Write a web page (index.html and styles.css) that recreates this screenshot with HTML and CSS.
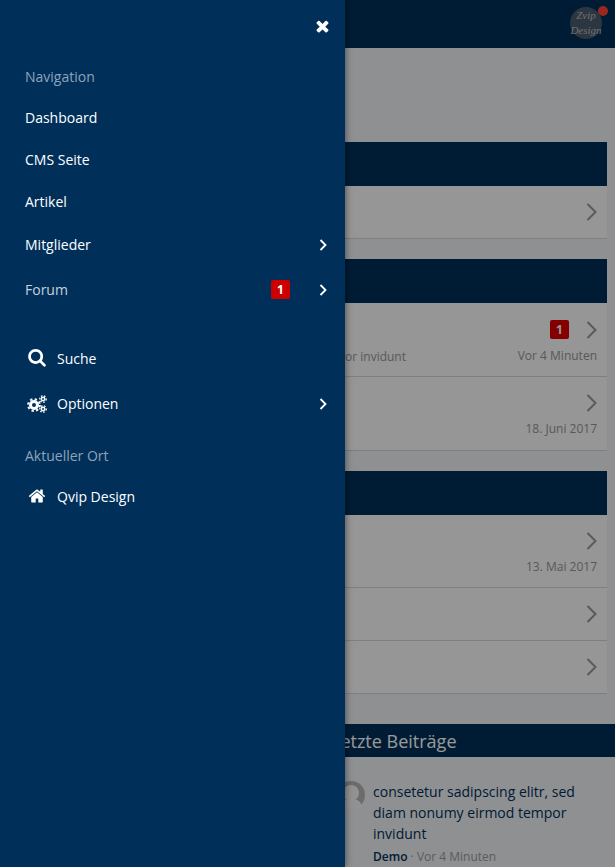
FILE: index.html
```html
<!DOCTYPE html>
<html lang="de">
<head>
<meta charset="utf-8">
<title>Qvip Design</title>
<link rel="stylesheet" href="styles.css">
</head>
<body>
<div class="page">
  <header class="topbar">
    <div class="logo"><span>Zvip</span><span>Design</span><i class="logo-dot"></i></div>
  </header>
  <main class="main">
    <section class="cat">
      <div class="cat-head"></div>
      <div class="row"><div class="row-main"></div><div class="row-side"><div class="row-top"><svg class="row-chev" viewBox="0 0 11 18"><path d="M1.500 1 9.500 9l-8 8"/></svg></div></div></div>
    </section>
    <section class="cat">
      <div class="cat-head"></div>
      <div class="row"><div class="row-main"><span>eirmod tempor invidunt</span></div><div class="row-side"><div class="row-top"><span class="badge badge-row">1</span><svg class="row-chev" viewBox="0 0 11 18"><path d="M1.500 1 9.500 9l-8 8"/></svg></div><div class="row-meta">Vor 4 Minuten</div></div></div>
      <div class="row row-lg"><div class="row-main"></div><div class="row-side"><div class="row-top"><svg class="row-chev" viewBox="0 0 11 18"><path d="M1.500 1 9.500 9l-8 8"/></svg></div><div class="row-meta">18. Juni 2017</div></div></div>
    </section>
    <section class="cat">
      <div class="cat-head"></div>
      <div class="row"><div class="row-main"></div><div class="row-side"><div class="row-top"><svg class="row-chev" viewBox="0 0 11 18"><path d="M1.500 1 9.500 9l-8 8"/></svg></div><div class="row-meta">13. Mai 2017</div></div></div>
      <div class="row"><div class="row-main"></div><div class="row-side"><div class="row-top"><svg class="row-chev" viewBox="0 0 11 18"><path d="M1.500 1 9.500 9l-8 8"/></svg></div></div></div>
      <div class="row"><div class="row-main"></div><div class="row-side"><div class="row-top"><svg class="row-chev" viewBox="0 0 11 18"><path d="M1.500 1 9.500 9l-8 8"/></svg></div></div></div>
    </section>
  </main>
  <h2 class="latest-head">Letzte Beiträge</h2>
  <article class="post">
    <svg class="avatar" viewBox="0 0 28 28"><circle cx="14" cy="14" r="14" class="avatar-bg"/><circle cx="14" cy="12" r="8" class="avatar-fg"/><path d="M3 28c0-8 5-10 11-10s11 2 11 10z" class="avatar-fg"/></svg>
    <div class="post-body">
      <p class="post-text">consetetur sadipscing elitr, sed diam nonumy eirmod tempor invidunt</p>
      <p class="post-meta"><b>Demo</b> · <span>Vor 4 Minuten</span></p>
    </div>
  </article>
</div>
<div class="overlay"></div>
<nav class="drawer">
  <div class="drawer-top">
    <svg class="close" viewBox="0 0 1408 1792"><path d="M1298 1322q0 40-28 68l-136 136q-28 28-68 28t-68-28l-294-294-294 294q-28 28-68 28t-68-28l-136-136q-28-28-28-68t28-68l294-294-294-294q-28-28-28-68t28-68l136-136q28-28 68-28t68 28l294 294 294-294q28-28 68-28t68 28l136 136q28 28 28 68t-28 68l-294 294 294 294q28 28 28 68z"/></svg>
  </div>
  <div class="drawer-label">Navigation</div>
  <a class="item">Dashboard</a>
  <a class="item">CMS Seite</a>
  <a class="item">Artikel</a>
  <a class="item item-tall">Mitglieder<svg class="chev" viewBox="0 0 8 12"><path d="M1.500 1 6.500 6l-5 5"/></svg></a>
  <a class="item item-tall item-dim">Forum<span class="badge badge-menu">1</span><svg class="chev" viewBox="0 0 8 12"><path d="M1.500 1 6.500 6l-5 5"/></svg></a>
  <a class="item item-tall item-first"><svg class="ico ico-search" viewBox="0 0 1664 1792"><path d="M1152 704q0-185-131.500-316.500t-316.500-131.500-316.500 131.500-131.500 316.500 131.500 316.500 316.500 131.500 316.500-131.500 131.500-316.500zm512 832q0 52-38 90t-90 38q-54 0-90-38l-343-342q-179 124-399 124-143 0-273.500-55.500t-225-150-150-225-55.500-273.500 55.500-273.500 150-225 225-150 273.500-55.500 273.500 55.500 225 150 150 225 55.500 273.500q0 220-124 399l343 343q37 37 37 90z"/></svg>Suche</a>
  <a class="item item-tall"><svg class="ico ico-gears" viewBox="0 0 20 18"><circle cx="7" cy="10" r="3.500" class="gear-ring-l"/><circle cx="7" cy="10" r="5.900" class="gear-teeth-l"/><circle cx="16" cy="4" r="1.700" class="gear-ring-s"/><circle cx="16" cy="4" r="3.200" class="gear-teeth-s"/><circle cx="16" cy="14" r="1.700" class="gear-ring-s"/><circle cx="16" cy="14" r="3.200" class="gear-teeth-s"/></svg>Optionen<svg class="chev" viewBox="0 0 8 12"><path d="M1.500 1 6.500 6l-5 5"/></svg></a>
  <div class="drawer-label drawer-label-2">Aktueller Ort</div>
  <a class="item"><svg class="ico ico-home" viewBox="0 0 1664 1792"><path d="M1408 992v480q0 26-19 45t-45 19h-384v-384h-256v384h-384q-26 0-45-19t-19-45v-480q0-1 .5-3t.5-3l575-474 575 474q1 2 1 6zm223-69l-62 74q-8 9-21 11h-3q-13 0-21-7l-692-577-692 577q-12 8-24 7-13-2-21-11l-62-74q-8-10-7-23.500t11-21.500l719-599q32-26 76-26t76 26l244 204v-195q0-14 9-23t23-9h192q14 0 23 9t9 23v408l219 182q10 8 11 21.500t-7 23.500z"/></svg>Qvip Design</a>
</nav>
</body>
</html>
```
FILE: styles.css
```css
* { box-sizing: border-box; }
html, body { margin: 0; height: 100%; overflow: hidden; }
body { font-family: "Open Sans", sans-serif; font-size: 14px; color: #002f58; background: #eef0f3; position: relative; }

.page { height: 867px; overflow: hidden; background: #eef0f3; }
.topbar { height: 48px; background: #002f58; display: flex; justify-content: flex-end; align-items: flex-start; padding: 7px 13px 0 0; }
.logo { position: relative; width: 32px; height: 32px; border-radius: 50%; background: #4a5a6c; color: #bdbdbd; font-family: "Liberation Serif", serif; font-style: italic; font-size: 11px; line-height: 15px; display: flex; flex-direction: column; align-items: center; justify-content: center; }
.logo-dot { position: absolute; top: -1px; right: -6px; width: 10px; height: 10px; border-radius: 50%; background: #ff4334; }

.main { padding: 94px 8px 0; }
.cat { margin-bottom: 20px; }
.cat-head { height: 44px; background: #002f58; }
.row { display: flex; background: #fafafa; border-bottom: 1px solid #d4d4d4; padding: 17px 10px 0; }
.row-lg { padding-bottom: 1px; }
.row-main { width: 398px; margin-left: -10px; flex: none; align-self: flex-end; display: flex; justify-content: flex-end; padding-bottom: 11px; font-size: 12px; line-height: 16px; color: #949494; white-space: nowrap; }
.row-side { flex: 1; display: flex; flex-direction: column; align-items: flex-end; padding-bottom: 17px; }
.row-top { display: flex; align-items: center; min-height: 18px; }
.row-chev { width: 11px; height: 18px; fill: none; stroke: #969696; stroke-width: 2; }
.row-meta { margin: 9px 0 -5px; font-size: 12px; line-height: 16px; color: #949494; }
.badge { width: 19px; height: 19px; border-radius: 2px; color: #fff; font-size: 12px; font-weight: 700; line-height: 19px; text-align: center; flex: none; }
.badge-row { background: #dd0000; margin-right: 17px; }

.latest-head { margin: 30px 0 0; height: 33px; padding: 1px 0 0 331px; background: #002f58; color: #fff; font-size: 18px; font-weight: 400; line-height: 33px; }
.post { display: flex; gap: 8px; padding: 24px 15px 0 337px; }
.avatar { width: 28px; height: 28px; flex: none; }
.avatar-bg { fill: #b4b4b4; }
.avatar-fg { fill: #f4f4f4; }
.post-text { margin: 0; line-height: 21px; color: #002f58; }
.post-meta { margin: 5px 0 0; font-size: 12px; line-height: 16px; color: #999; }
.post-meta b { font-weight: 600; color: #002f58; }

.overlay { position: absolute; inset: 0; background: rgba(0, 0, 0, .4); }

.drawer { position: absolute; top: 0; left: 0; bottom: 0; width: 345px; background: #00305a; color: #fff; box-shadow: 0 0 7px rgba(0, 0, 0, .55); padding-top: 17px; }
.drawer-top { display: flex; justify-content: flex-end; height: 47px; padding-right: 15px; }
.close { width: 15px; height: 18px; fill: #fff; }
.drawer-label { padding-left: 25px; margin-bottom: 6px; line-height: 26px; color: #8ea3b9; }
.drawer-label-2 { margin-top: 17px; }
.item { display: flex; align-items: center; height: 42px; padding: 0 18px 0 25px; color: #fff; }
.item-tall { height: 45px; }
.item-dim { color: #c6d2dd; }
.item-first { margin-top: 24px; }
.chev { width: 8px; height: 12px; margin-left: auto; fill: none; stroke: #fff; stroke-width: 1.800; }
.badge-menu { background: #cc0000; margin-left: auto; margin-right: 29px; }
.badge-menu + .chev { margin-left: 0; }
.ico { flex: none; fill: #fff; }
.ico-search { width: 18px; height: 19px; margin: 0 11px 0 3px; }
.ico-home { width: 18px; height: 18px; margin: 0 11px 0 3px; }
.ico-gears { width: 20px; height: 18px; margin: 0 10px 0 2px; fill: none; }
.gear-ring-l, .gear-ring-s, .gear-teeth-l, .gear-teeth-s { fill: none; stroke: #fff; }
.gear-ring-l { stroke-width: 3; }
.gear-ring-s { stroke-width: 1.500; }
.gear-teeth-l { stroke-width: 2; stroke-dasharray: 2.300 2.330; }
.gear-teeth-s { stroke-width: 1.300; stroke-dasharray: 1.600 1.540; }
```
